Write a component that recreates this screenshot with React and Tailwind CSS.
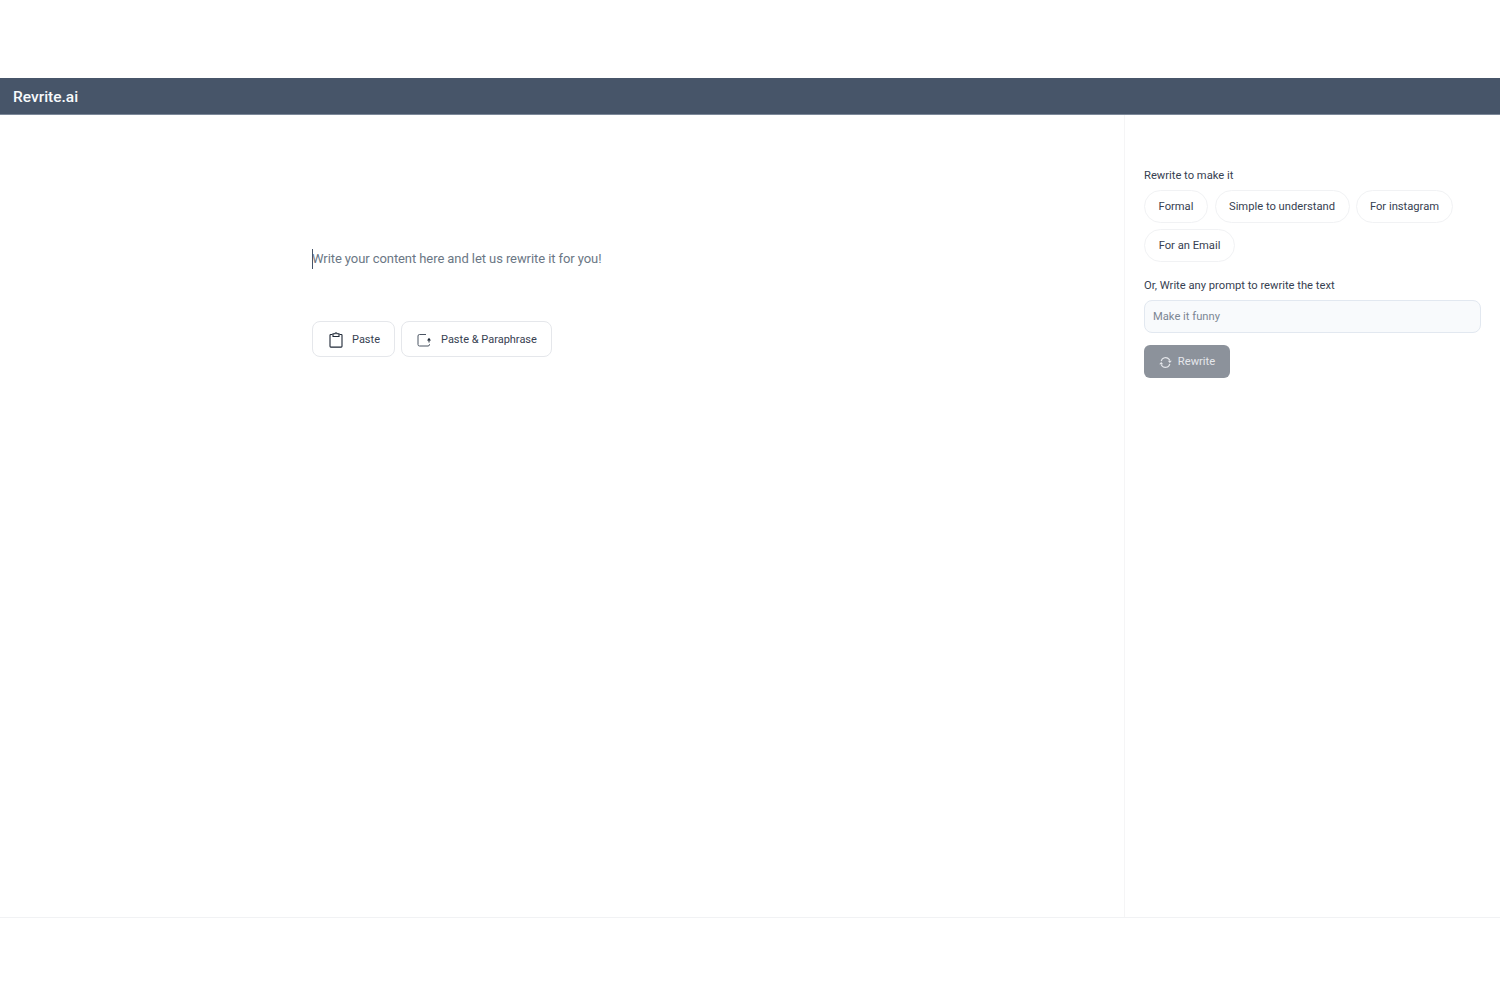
import React from "react";

const font = "font-['Roboto','Liberation_Sans',sans-serif]";
const presets = [
  { label: "Formal", width: "w-[64px]" },
  { label: "Simple to understand", width: "w-[135px]" },
  { label: "For instagram", width: "w-[97px]" },
  { label: "For an Email", width: "w-[91px]" },
];

function ClipboardIcon() {
  return (
    <svg width="16" height="16" viewBox="0 0 16 16" fill="none" stroke="#1f2937" strokeWidth="1.1">
      <path d="M4.5 2.5H2.8a.8.8 0 0 0-.8.8v11a.8.8 0 0 0 .8.8h10.4a.8.8 0 0 0 .8-.8v-11a.8.8 0 0 0-.8-.8h-1.7" />
      <path d="M5 1.8h2a1 1 0 0 1 2 0h2v2.7H5z" />
    </svg>
  );
}

function PasteParaphraseIcon() {
  return (
    <svg width="16" height="16" viewBox="0 0 16 16" fill="none">
      <path d="M10 2.5H3.5A1.5 1.5 0 0 0 2 4v8.5A1.5 1.5 0 0 0 3.5 14h8.5a1.5 1.5 0 0 0 1.5-1.5V12" stroke="#4b5563" strokeWidth="1" />
      <path d="M13 7.5v3" stroke="#1f2937" strokeWidth="1" />
      <path d="M13 5.8l2 2.6h-4z" fill="#1f2937" />
    </svg>
  );
}

function RenewIcon() {
  return (
    <svg width="13" height="13" viewBox="0 0 13 13" fill="none" stroke="#e5e7eb" strokeWidth="1.1">
      <path d="M2.2 5.2a4.5 4.5 0 0 1 8-1.8l.6 1.2" />
      <path d="M10.8 7.8a4.5 4.5 0 0 1-8 1.8l-.6-1.2" />
      <path d="M8.8 4.7h4l-2 2.2zM4.2 8.3h-4l2-2.2z" fill="#e5e7eb" stroke="none" />
    </svg>
  );
}

export default function App() {
  return (
    <div className={`${font} h-[1000px] bg-white`}>
      <div className="h-[78px]" />
      <header className="flex h-[37px] items-center bg-[#475569] pl-[13px] pt-[3px] border-b border-[#7c8899]">
        <span className="text-[15.5px] font-medium leading-none text-[#f8fafc]">Revrite.ai</span>
      </header>

      <div className="flex h-[803px] border-b border-[#f1f2f4]">
        <main className="flex-1 pl-[312px] pt-[134px]">
          <div className="relative text-[13px] tracking-[-0.08px] leading-5 text-[#6b7785]">
            <span className="absolute left-0 top-0 h-5 w-px bg-[#475569]" />
            Write your content here and let us rewrite it for you!
          </div>
          <div className="mt-[52px] flex gap-[6px]">
            <button className="flex h-9 w-[83px] items-center gap-2 rounded-lg border border-[#e5e7eb] pl-[15px] pt-[2px] text-[11px] text-[#374151]">
              <ClipboardIcon />
              Paste
            </button>
            <button className="flex h-9 w-[151px] items-center gap-[9px] rounded-lg border border-[#e5e7eb] pl-[14px] pt-[2px] text-[11px] text-[#374151]">
              <PasteParaphraseIcon />
              Paste &amp; Paraphrase
            </button>
          </div>
        </main>

        <aside className="w-[376px] border-l border-[#f5f5f6] pl-[19px] pr-[19px] pt-[53px]">
          <p className="text-[11.2px] leading-4 text-[#374151]">Rewrite to make it</p>
          <div className="mt-[6px] flex flex-wrap gap-x-[6.5px] gap-y-[6px]">
            {presets.map(({ label, width }) => (
              <button
                key={label}
                className={`h-[33px] ${width} rounded-full border border-[#f1f2f4] pt-[2px] text-[11.2px] text-[#374151]`}
              >
                {label}
              </button>
            ))}
          </div>
          <p className="mt-[15px] pt-px text-[11.2px] leading-4 text-[#374151]">Or, Write any prompt to rewrite the text</p>
          <div className="mt-[6px] flex h-[33px] items-center rounded-lg border border-[#e2e8f0] bg-[#f8fafc] px-2 pt-px text-[11.2px] text-[#7c8794]">
            Make it funny
          </div>
          <button className="mt-[12px] flex h-[33px] w-[86px] items-center justify-center gap-[6px] rounded-md bg-[#8c929b] pt-px text-[11.2px] text-[#e5e7eb]">
            <RenewIcon />
            Rewrite
          </button>
        </aside>
      </div>
    </div>
  );
}
